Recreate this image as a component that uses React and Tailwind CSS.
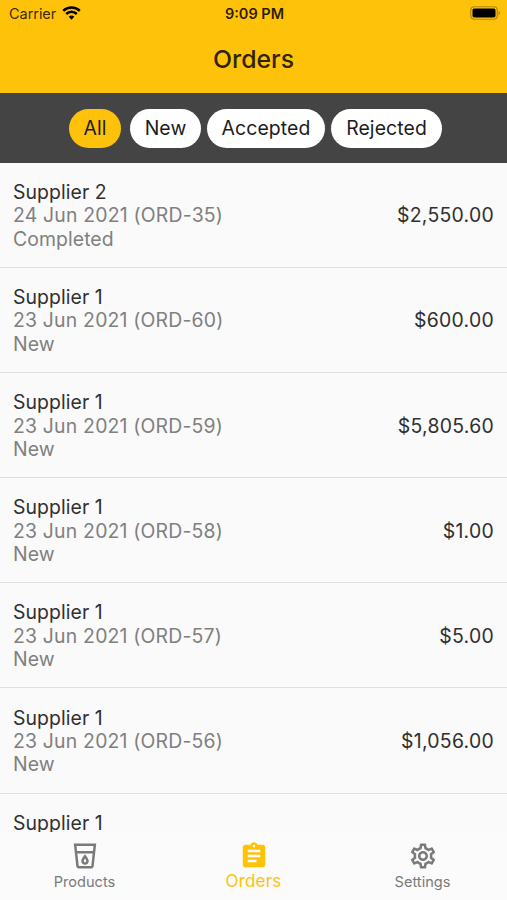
import React, { useState } from 'react';
import { MdAssignment, MdOutlineLocalDrink, MdOutlineSettings } from 'react-icons/md';

const FILTERS = [
  { label: 'All', box: 'w-[52px] mr-[9px]' },
  { label: 'New', box: 'w-[71px] mr-[6px]' },
  { label: 'Accepted', box: 'w-[118px] mr-[6px]' },
  { label: 'Rejected', box: 'w-[111px]' },
];

const ORDERS = [
  { supplier: 'Supplier 2', date: '24 Jun 2021', id: 'ORD-35', status: 'Completed', total: '$2,550.00' },
  { supplier: 'Supplier 1', date: '23 Jun 2021', id: 'ORD-60', status: 'New', total: '$600.00' },
  { supplier: 'Supplier 1', date: '23 Jun 2021', id: 'ORD-59', status: 'New', total: '$5,805.60' },
  { supplier: 'Supplier 1', date: '23 Jun 2021', id: 'ORD-58', status: 'New', total: '$1.00' },
  { supplier: 'Supplier 1', date: '23 Jun 2021', id: 'ORD-57', status: 'New', total: '$5.00' },
  { supplier: 'Supplier 1', date: '23 Jun 2021', id: 'ORD-56', status: 'New', total: '$1,056.00' },
  { supplier: 'Supplier 1' },
];

const TABS = [
  { label: 'Products', Icon: MdOutlineLocalDrink },
  { label: 'Orders', Icon: MdAssignment },
  { label: 'Settings', Icon: MdOutlineSettings },
];

const StatusBar = () => (
  <div className="grid grid-cols-3 items-center h-[27px] pl-[9px] pr-[6px] text-black">
    <div className="flex items-center gap-[6px]">
      <span className="pt-[2px] text-[14.5px] leading-none tracking-[-0.05px] text-black/80">Carrier</span>
      <svg className="-mt-px" width="19" height="14" viewBox="0 0 19 14" fill="none" stroke="currentColor" strokeWidth="2.5">
        <path d="M1.2 4.8a11.8 11.8 0 0 1 16.6 0" />
        <path d="M4.2 8a7.5 7.5 0 0 1 10.6 0" />
        <path d="M9.5 13.7L6.7 10.8a4 4 0 0 1 5.6 0z" fill="currentColor" stroke="none" />
      </svg>
    </div>
    <span className="pt-[2px] pr-px text-center text-[14.5px] leading-none font-semibold text-black/85">9:09 PM</span>
    <svg className="justify-self-end -mt-px" width="31" height="14" viewBox="0 0 31 14">
      <rect x="0.75" y="0.75" width="26.5" height="12.5" rx="3.5" fill="none" stroke="#000" strokeOpacity="0.3" strokeWidth="1.2" />
      <rect x="2.5" y="2.5" width="23" height="9" rx="1.8" fill="#000" />
      <path d="M28.6 4.8c1.8.7 1.8 3.7 0 4.4z" fill="#000" fillOpacity="0.35" />
    </svg>
  </div>
);

const OrderRow = ({ supplier, date, id, status, total }) => (
  <li className="flex items-center justify-between h-[105.1px] shrink-0 px-[13px] pt-[2px] border-b border-[#dedede] text-[19.4px] leading-[23.3px]">
    <div className="text-[#808080]">
      <p className="tracking-[0.08px] text-[#303030]">{supplier}</p>
      <p className="tracking-[0.2px]">{date ? `${date} (${id})` : '\u00a0'}</p>
      <p className="tracking-[0.08px]">{status || '\u00a0'}</p>
    </div>
    <span className="tracking-[0.28px] text-[#303030]">{total}</span>
  </li>
);

const App = () => {
  const [filter, setFilter] = useState('All');
  const [tab, setTab] = useState('Orders');

  return (
    <div className="flex flex-col w-full h-[900px] overflow-hidden bg-[#fafafa] font-['Inter',sans-serif]">
      <header className="h-[93px] shrink-0 bg-[#ffc20a]">
        <StatusBar />
        <h1 className="text-center text-[24.8px] leading-[65px] font-[460] text-[#302402]">Orders</h1>
      </header>

      <div className="flex items-center justify-center h-[70px] shrink-0 pl-[4px] bg-[#444444]">
        {FILTERS.map(({ label, box }) => (
          <button
            key={label}
            onClick={() => setFilter(label)}
            className={`h-[39px] pt-[2px] rounded-full text-[19.4px] leading-none tracking-[0.1px] text-[#1c1c1c] ${box} ${
              filter === label ? 'bg-[#ffc20a]' : 'bg-white'
            }`}
          >
            {label}
          </button>
        ))}
      </div>

      <ul className="flex flex-col flex-1 min-h-0 overflow-hidden">
        {ORDERS.map((order, i) => (
          <OrderRow key={i} {...order} />
        ))}
      </ul>

      <nav className="grid grid-cols-3 h-[68px] shrink-0 bg-[#fbfbfb]">
        {TABS.map(({ label, Icon }) => (
          <button
            key={label}
            onClick={() => setTab(label)}
            className={`flex flex-col items-center pt-[9px] ${tab === label ? 'text-[#ffc20a]' : 'text-[#7a7a7a]'}`}
          >
            <Icon size={30} />
            <span
              className={
                tab === label
                  ? 'mt-px text-[17px] leading-[19px] tracking-[0.2px]'
                  : 'mt-[2px] text-[14.6px] leading-[19px]'
              }
            >
              {label}
            </span>
          </button>
        ))}
      </nav>
    </div>
  );
};

export default App;
